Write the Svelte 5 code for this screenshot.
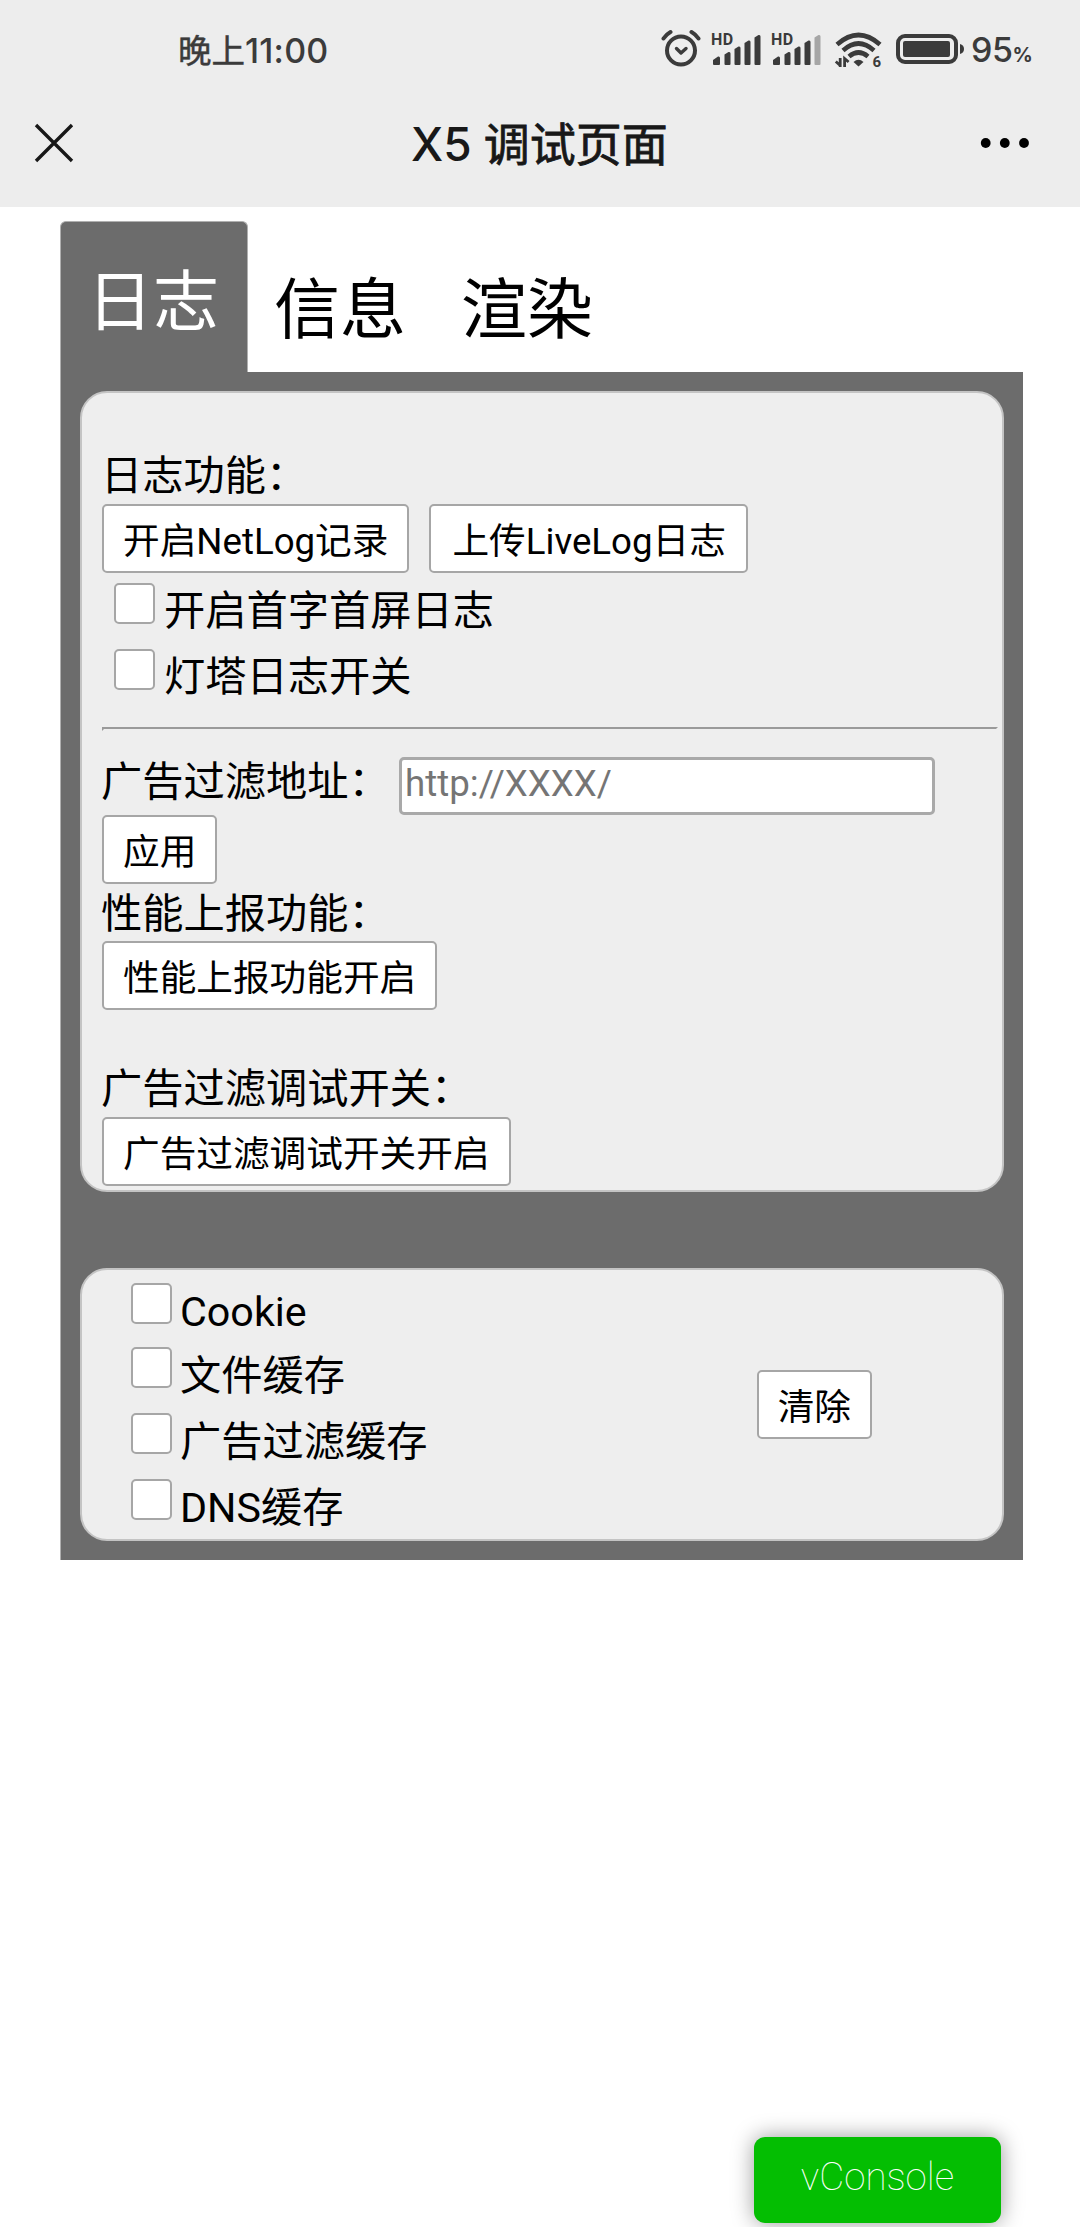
<script>
  let address = $state('');
  const tabs = ['日志', '信息', '渲染'];
  let active = $state('日志');
  const logSwitches = ['开启首字首屏日志', '灯塔日志开关'];
  const caches = ['Cookie', '文件缓存', '广告过滤缓存', 'DNS缓存'];
</script>

{#snippet signal(dim)}
  <svg class="signal" width="50" height="34" viewBox="0 0 50 34">
    <text x="-1" y="12.500" class="hd">HD</text>
    <path d="M1 32v-4l5-3.500q2-.5 2 1.500v6q0 1-1 1h-5q-1 0-1-1z" />
    <path d="M12.500 22.500l4-2.500q2-.5 2 1.500v10.500q0 1-1 1h-4q-1 0-1-1z" />
    <path d="M22.500 17l4-2.500q2-.5 2 1.500v16q0 1-1 1h-4q-1 0-1-1z" />
    <path d="M32.500 11l4-2.500q2-.5 2 1.500v22q0 1-1 1h-4q-1 0-1-1z" />
    <path class:dim d="M42.500 5.500l4-2.500q2-.5 2 1.500v27.500q0 1-1 1h-4q-1 0-1-1z" />
  </svg>
{/snippet}

<div class="screen">
  <header>
    <div class="status">
      <span class="time">晚上<b>11:00</b></span>
      <div class="icons">
        <svg class="alarm" width="40" height="38" viewBox="0 0 40 38" fill="none" stroke="#3b3b3b" stroke-linecap="round">
          <circle cx="20" cy="21.500" r="14" stroke-width="4" />
          <path d="M2.500 9.500Q5 5.500 9.500 3M37.500 9.500Q35 5.500 30.500 3" stroke-width="4" />
          <path d="M15.500 19.500l4.500 4.500 5-4.500" stroke-width="3.400" stroke-linejoin="round" />
        </svg>
        {@render signal(false)}
        {@render signal(true)}
        <svg class="wifi" width="48" height="36" viewBox="0 0 48 36" fill="none" stroke="#3b3b3b" stroke-width="4.600">
          <path d="M2 12.500Q23.500-6.500 45 12.500" />
          <path d="M8 18.500Q23.500 4.500 39 18.500" />
          <path d="M14 24.500Q23.500 16.500 33 24.500" />
          <path d="M18.500 30q5-4.500 10 0l-5 4.500z" fill="#3b3b3b" stroke="none" />
          <path d="M5.200 26v9M.8 29.500l4.400 4M9.600 35v-8.500l4 3.500" stroke-width="2.800" />
          <text x="37.500" y="35" class="six">6</text>
        </svg>
        <svg class="battery" width="70" height="32" viewBox="0 0 70 32">
          <rect x="2" y="2" width="58" height="26" rx="7" fill="none" stroke="#3b3b3b" stroke-width="4" />
          <rect x="7" y="7" width="47" height="16" rx="2" fill="#3b3b3b" />
          <path d="M64 10q4 1 4 5t-4 5z" fill="#3b3b3b" />
        </svg>
        <span class="pct">95<small>%</small></span>
      </div>
    </div>
    <div class="nav">
      <svg width="40" height="40" viewBox="0 0 40 40" stroke="#181818" stroke-width="3.400">
        <path d="M2 2l36 36M38 2L2 38" />
      </svg>
      <h1><b>X5</b>调试页面</h1>
      <svg width="50" height="12" viewBox="0 0 50 12" fill="#000">
        <circle cx="5.700" cy="6" r="4.900" /><circle cx="24.800" cy="6" r="4.900" /><circle cx="44" cy="6" r="4.900" />
      </svg>
    </div>
  </header>

  <main>
    <nav class="tabs">
      {#each tabs as tab}
        <button class="tab" class:active={tab === active} onclick={() => (active = tab)}>{tab}</button>
      {/each}
    </nav>

    <div class="panel">
      <section class="card log">
        <div class="label">日志功能：</div>
        <div class="buttons">
          <button class="btn">开启NetLog记录</button>
          <button class="btn">上传LiveLog日志</button>
        </div>
        {#each logSwitches as item}
          <label class="check"><input type="checkbox" /><span>{item}</span></label>
        {/each}
        <hr />
        <div class="address">
          <div class="label">广告过滤地址：</div>
          <input type="text" placeholder="http://XXXX/" bind:value={address} />
        </div>
        <button class="btn">应用</button>
        <div class="label tight">性能上报功能：</div>
        <button class="btn">性能上报功能开启</button>
        <div class="label spaced">广告过滤调试开关：</div>
        <button class="btn">广告过滤调试开关开启</button>
      </section>

      <section class="card cache">
        <div class="list">
          {#each caches as item}
            <label class="check"><input type="checkbox" /><span>{item}</span></label>
          {/each}
        </div>
        <button class="btn">清除</button>
      </section>
    </div>
  </main>

  <button class="vconsole">vConsole</button>
</div>

<style>
  :global(body) {
    margin: 0;
    background: #fff;
  }
  .screen {
    position: relative;
    width: 1080px;
    height: 2227px;
    overflow: hidden;
    font-family: Roboto, 'Noto Sans CJK SC', sans-serif;
    color: #000;
  }
  button,
  input {
    font-family: inherit;
    color: inherit;
    margin: 0;
    box-sizing: border-box;
  }
  header {
    height: 207px;
    background: #ededed;
  }
  .status {
    display: flex;
    justify-content: space-between;
    height: 96px;
    padding: 0 48px 0 178px;
    color: #3b3b3b;
  }
  .time {
    font: 33.500px/97px 'Noto Sans CJK SC', sans-serif;
    -webkit-text-stroke: 0.5px #3b3b3b;
  }
  .time b {
    font: 500 34px Inter, sans-serif;
    letter-spacing: 0.200px;
    -webkit-text-stroke: 0;
  }
  .icons {
    display: flex;
    align-items: flex-start;
    fill: #3b3b3b;
  }
  .alarm {
    margin: 29px 11px 0 0;
  }
  .signal {
    margin: 32px 10px 0 0;
    overflow: visible;
  }
  .hd {
    font: 700 16px Roboto, sans-serif;
    letter-spacing: 0.4px;
  }
  .dim {
    fill: #a6a6a6;
  }
  .wifi {
    margin: 32px 13px 0 3px;
    overflow: visible;
  }
  .six {
    font: 700 15px Roboto, sans-serif;
    fill: #3b3b3b;
    stroke: none;
  }
  .battery {
    margin: 34px 5px 0 0;
  }
  .pct {
    width: 61px;
    font: 500 34px/99px Inter, sans-serif;
    letter-spacing: -0.5px;
    white-space: nowrap;
  }
  .pct small {
    font: 700 20px Inter, sans-serif;
  }
  .nav {
    display: flex;
    align-items: center;
    height: 93px;
    padding: 0 49px 0 34px;
  }
  h1 {
    width: 257px;
    margin: 0 312px 4px 337px;
    font: 46px/88px 'Noto Sans CJK SC', sans-serif;
    color: #181818;
    white-space: nowrap;
    -webkit-text-stroke: 0.8px #181818;
  }
  h1 b {
    margin-right: 12px;
    font: 500 46px Inter, sans-serif;
    -webkit-text-stroke: 0;
  }
  main {
    width: 963px;
    margin: 14px 0 0 60px;
  }
  .tabs {
    display: flex;
    height: 151px;
  }
  .tab {
    width: 187px;
    padding: 15px 3px 0 0;
    border: 0;
    border-radius: 6px 6px 0 0;
    background: none;
    font-size: 66px;
  }
  .tab.active {
    width: 188px;
    padding: 0 2px 3px 0;
    border: solid #b0b0b0;
    border-width: 1px 1px 0;
    background: #6c6c6c;
    color: #fff;
  }
  .panel {
    box-sizing: border-box;
    height: 1188px;
    padding: 19px 19px 0 19px;
    border-left: 1px solid #b0b0b0;
    background: #6c6c6c;
  }
  .card {
    box-sizing: border-box;
    border: 2px solid #c4c4c4;
    border-radius: 27px;
    background: #eee;
  }
  .log {
    height: 801px;
    padding: 51px 4px 0 20px;
  }
  .label {
    height: 60px;
    margin-left: -1px;
    font-size: 41.250px;
    line-height: 65px;
    white-space: nowrap;
  }
  .tight {
    height: 57px;
    line-height: 60px;
  }
  .spaced {
    padding-top: 47px;
  }
  .buttons {
    display: flex;
    gap: 20px;
  }
  .btn {
    display: block;
    height: 69px;
    padding: 6px 19px 0;
    border: 2px solid #a6a6a6;
    border-radius: 5px;
    background: #fff;
    font-size: 36.670px;
    line-height: 59px;
    white-space: nowrap;
  }
  .buttons .btn + .btn {
    padding: 6px 20px 0 21px;
  }
  .check {
    display: flex;
    height: 66px;
    padding-left: 12px;
    font-size: 41.250px;
    line-height: 77px;
  }
  .check input {
    appearance: none;
    width: 41px;
    height: 41px;
    margin: 10px 9px 0 0;
    border: 2px solid #a6a6a6;
    border-radius: 5px;
    background: #fff;
  }
  hr {
    height: 4px;
    margin: 22px 0 0;
    box-sizing: border-box;
    border: 2px solid;
    border-color: #9a9a9a #eee #eee #9a9a9a;
  }
  .address {
    display: flex;
    align-items: flex-start;
    height: 84px;
  }
  .address .label {
    width: 298px;
    margin-top: 20px;
    line-height: 63px;
  }
  .address input {
    width: 536px;
    height: 58px;
    margin-top: 26px;
    padding: 0 4px 5px 3px;
    border: 3px solid #a9a9a9;
    border-radius: 5px;
    background: #fff;
    font-size: 36.670px;
  }
  .address input::placeholder {
    color: #757575;
  }
  .cache {
    display: flex;
    justify-content: space-between;
    height: 273px;
    margin-top: 76px;
    padding: 3px 130px 0 37px;
  }
  .cache .check {
    line-height: 79px;
  }
  .cache .check input {
    margin-right: 8px;
  }
  .cache .check:first-child {
    height: 64px;
  }
  .cache .btn {
    margin-top: 97px;
  }
  .vconsole {
    position: absolute;
    left: 754px;
    top: 2137px;
    width: 247px;
    height: 86px;
    padding: 0 0 8px;
    border: 0;
    border-radius: 11px;
    background: #04be02;
    box-shadow: 0 0 22px rgba(0, 0, 0, 0.4);
    color: #fff;
    font-size: 38.500px;
    font-weight: 100;
  }
</style>
